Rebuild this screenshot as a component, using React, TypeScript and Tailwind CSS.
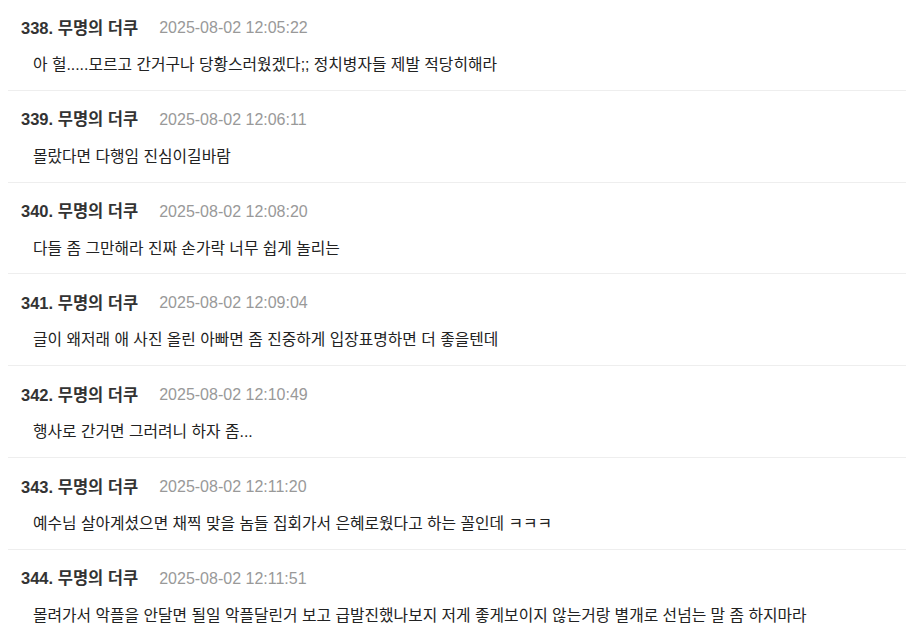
const comments = [
  {
    no: 338,
    date: "2025-08-02 12:05:22",
    text: "아 헐.....모르고 간거구나 당황스러웠겠다;; 정치병자들 제발 적당히해라",
  },
  { no: 339, date: "2025-08-02 12:06:11", text: "몰랐다면 다행임 진심이길바람" },
  {
    no: 340,
    date: "2025-08-02 12:08:20",
    text: "다들 좀 그만해라 진짜 손가락 너무 쉽게 놀리는",
  },
  {
    no: 341,
    date: "2025-08-02 12:09:04",
    text: "글이 왜저래 애 사진 올린 아빠면 좀 진중하게 입장표명하면 더 좋을텐데",
  },
  { no: 342, date: "2025-08-02 12:10:49", text: "행사로 간거면 그러려니 하자 좀..." },
  {
    no: 343,
    date: "2025-08-02 12:11:20",
    text: "예수님 살아계셨으면 채찍 맞을 놈들 집회가서 은혜로웠다고 하는 꼴인데 ㅋㅋㅋ",
  },
  {
    no: 344,
    date: "2025-08-02 12:11:51",
    text: "몰려가서 악플을 안달면 될일 악플달린거 보고 급발진했나보지 저게 좋게보이지 않는거랑 별개로 선넘는 말 좀 하지마라",
  },
];

export default function App() {
  return (
    <div
      className="min-h-screen bg-white overflow-hidden"
      style={{ fontFamily: '"Liberation Sans", "Noto Sans CJK KR", sans-serif' }}
    >
      <ul className="-mt-[1px] ml-2">
        {comments.map((c) => (
          <li key={c.no} className="border-b border-[#eeeeee] pl-[13px] pt-[19px] pb-[13.8px]">
            <div className="flex items-center h-5">
              <span className="text-[16.5px] font-bold text-[#333333]">
                {c.no}. 무명의 더쿠
              </span>
              <span className="ml-[21px] text-[16px] text-[#999999]">{c.date}</span>
            </div>
            <p className="mt-[15px] pl-3 text-[15.8px] leading-[23px] text-[#222222] whitespace-nowrap">
              {c.text}
            </p>
          </li>
        ))}
      </ul>
    </div>
  );
}
